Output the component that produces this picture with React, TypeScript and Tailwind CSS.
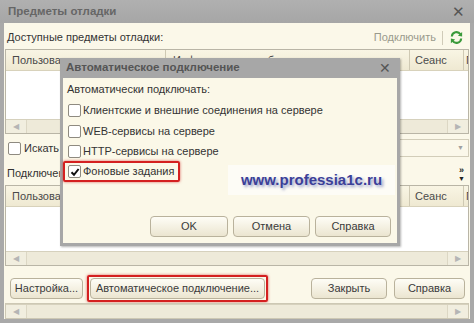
import React from "react";

const font = { fontFamily: '"Liberation Sans", Arial, sans-serif' };

function Box({ checked = false }: { checked?: boolean }) {
  return (
    <span className="inline-flex w-[13px] h-[13px] items-center justify-center border border-[#8e8a80] bg-white rounded-[2px] shrink-0">
      {checked && (
        <svg width="10" height="10" viewBox="0 0 10 10">
          <path d="M1.5 5.2 L4 7.8 L8.6 2" stroke="#111" strokeWidth="2" fill="none" />
        </svg>
      )}
    </span>
  );
}

function Btn({ children, className = "" }: { children: React.ReactNode; className?: string }) {
  return (
    <div
      className={
        "h-[21px] shrink-0 whitespace-nowrap flex items-center justify-center rounded-[4px] border border-[#b9b29c] bg-gradient-to-b from-[#fefdf6] to-[#ebe5d0] text-[11px] text-[#3a3a3a] " +
        className
      }
    >
      {children}
    </div>
  );
}

function HScroll() {
  return (
    <div className="h-[14px] shrink-0 flex bg-[#f1eedf] border-t border-[#d6d1bd]">
      <div className="w-[20px] flex items-center justify-center text-[8px] text-[#b5b5b5]">◀</div>
      <div className="flex-1 border-x border-[#dcd7c4] bg-[#eeead9]" />
      <div className="w-[20px] flex items-center justify-center text-[8px] text-[#b5b5b5]">▶</div>
    </div>
  );
}

function TableHeader() {
  return (
    <div className="h-[21px] shrink-0 flex bg-gradient-to-b from-[#f9f5e4] to-[#efe9d2] border-b border-[#d8d2bb] text-[11px] text-[#4a4a4a] whitespace-nowrap">
      <div className="w-[160px] pl-[6px] flex items-center border-r border-[#cfc9b3] overflow-hidden">Пользователь</div>
      <div className="w-[244px] pl-[7px] flex items-center border-r border-[#cfc9b3] overflow-hidden">Информационная база</div>
      <div className="w-[54px] pl-[5px] flex items-center border-r border-[#cfc9b3] overflow-hidden">Сеанс</div>
      <div className="flex-1 pl-[2px] flex items-center overflow-hidden">П</div>
    </div>
  );
}

export default function App() {
  return (
    <div style={font} className="w-[474px] h-[323px] relative overflow-hidden bg-[#a9a9a9] flex flex-col">
      {/* title bar */}
      <div className="h-[23px] shrink-0 flex items-center justify-between pl-[8px] pr-[9px] bg-gradient-to-b from-[#b0b0b0] to-[#a6a6a6]">
        <span className="text-[11.5px] font-bold text-[#666666]">Предметы отладки</span>
        <span className="text-[15px] text-[#555] leading-none">✕</span>
      </div>
      {/* body */}
      <div className="h-[296px] shrink-0 mx-[4px] bg-[#fbf8e9] flex flex-col">
        <div className="h-[26px] shrink-0 pt-[3px] flex items-center justify-between pl-[3px] pr-[6px] text-[11px]">
          <span className="text-[#333]">Доступные предметы отладки:</span>
          <div className="flex items-center gap-[6px]">
            <span className="text-[#9a9a8c]">Подключить</span>
            <span className="w-px h-[14px] bg-[#d0cbb8]" />
            <svg width="15" height="15" viewBox="0 0 16 16">
              <path d="M3 7 A5 5 0 0 1 12.2 4.6" stroke="#3a9a3a" strokeWidth="2.2" fill="none" />
              <path d="M14 2 L14 7 L9.5 6 Z" fill="#3a9a3a" />
              <path d="M13 9 A5 5 0 0 1 3.8 11.4" stroke="#3a9a3a" strokeWidth="2.2" fill="none" />
              <path d="M2 14 L2 9 L6.5 10 Z" fill="#3a9a3a" />
            </svg>
          </div>
        </div>
        {/* table 1 */}
        <div className="mx-[1px] h-[85px] shrink-0 border border-[#b9b5a6] flex flex-col">
          <TableHeader />
          <div className="flex-1 bg-white" />
          <HScroll />
        </div>
        {/* search row */}
        <div className="h-[28px] shrink-0 flex items-center pl-[4px] pr-[1px] gap-[3px] text-[11px] text-[#333]">
          <Box />
          <span>Искать</span>
          <div className="ml-auto w-[300px] h-[18px] border border-[#d2cdb9] bg-[#fbf8ea] flex justify-end">
            <div className="w-[15px] flex items-center justify-center text-[7px] text-[#a0a0a0]">▼</div>
          </div>
        </div>
        {/* connected label */}
        <div className="h-[23px] shrink-0 flex items-center justify-between pl-[3px] pr-[5px] text-[11px] text-[#333]">
          <span>Подключенные предметы отладки:</span>
          <div className="flex flex-col items-center leading-none text-[9px] text-[#222]">
            <span className="font-bold">»</span>
            <span className="text-[7px]">▼</span>
          </div>
        </div>
        {/* table 2 */}
        <div className="mx-[1px] h-[81px] shrink-0 border border-[#b9b5a6] flex flex-col">
          <TableHeader />
          <div className="flex-1 bg-white" />
          <HScroll />
        </div>
        {/* buttons */}
        <div className="h-[36px] shrink-0 pt-[8px] flex items-center pl-[6px] pr-[5px]">
          <Btn className="w-[73px]">Настройка...</Btn>
          <div className="ml-[4px] p-[1px] border-[2px] border-[#d42020] rounded-[2px] shadow-[0_0_3px_rgba(200,0,0,0.6)]">
            <Btn className="w-[175px]">Автоматическое подключение...</Btn>
          </div>
          <Btn className="ml-auto w-[76px]">Закрыть</Btn>
          <Btn className="ml-[7px] w-[71px]">Справка</Btn>
        </div>
        <div className="mx-[1px] mt-[1px] shrink-0 border border-[#cdc8b4]">
          <HScroll />
        </div>
      </div>

      {/* dialog overlay */}
      <div className="absolute left-[60px] top-[58px] w-[340px] h-[188px] bg-[#a7a7a7] flex flex-col shadow-[1px_1px_2px_rgba(0,0,0,0.3)]">
        <div className="h-[20px] shrink-0 flex items-center justify-between pl-[6px] pr-[9px]">
          <span className="text-[11.5px] font-bold text-[#555]">Автоматическое подключение</span>
          <span className="text-[14px] text-[#555] leading-none">✕</span>
        </div>
        <div className="flex-1 mx-[3px] mb-[3px] bg-[#fbf8e8] relative flex flex-col text-[11px] text-[#333]">
          <div className="pl-[4px] pt-[1px] h-[22px] shrink-0 flex items-center">Автоматически подключать:</div>
          <div className="flex flex-col pl-[5px]">
            <div className="h-[21px] flex items-center gap-[2px]"><Box /><span>Клиентские и внешние соединения на сервере</span></div>
            <div className="h-[20px] flex items-center gap-[2px]"><Box /><span>WEB-сервисы на сервере</span></div>
            <div className="h-[20px] flex items-center gap-[2px]"><Box /><span>HTTP-сервисы на сервере</span></div>
            <div className="self-start h-[21px] -ml-[5px] pl-[3px] pr-[4px] border-[2px] border-[#d42020] rounded-[2px] shadow-[0_0_3px_rgba(200,0,0,0.6)] flex items-center gap-[2px]">
              <Box checked />
              <span>Фоновые задания</span>
            </div>
          </div>
          <div className="absolute left-[165px] top-[87px] w-[167px] h-[30px] bg-[#fdfcf6] flex items-center justify-center">
            <span
              className="text-[15px] font-bold text-[#3b3f98]"
              style={{ textShadow: "2px 2px 3px rgba(90,100,170,0.6)" }}
            >
              www.professia1c.ru
            </span>
          </div>
          <div className="mt-auto mb-[6px] flex justify-end gap-[5px] pr-[6px]">
            <Btn className="w-[78px]">OK</Btn>
            <Btn className="w-[77px]">Отмена</Btn>
            <Btn className="w-[76px]">Справка</Btn>
          </div>
        </div>
      </div>
    </div>
  );
}
